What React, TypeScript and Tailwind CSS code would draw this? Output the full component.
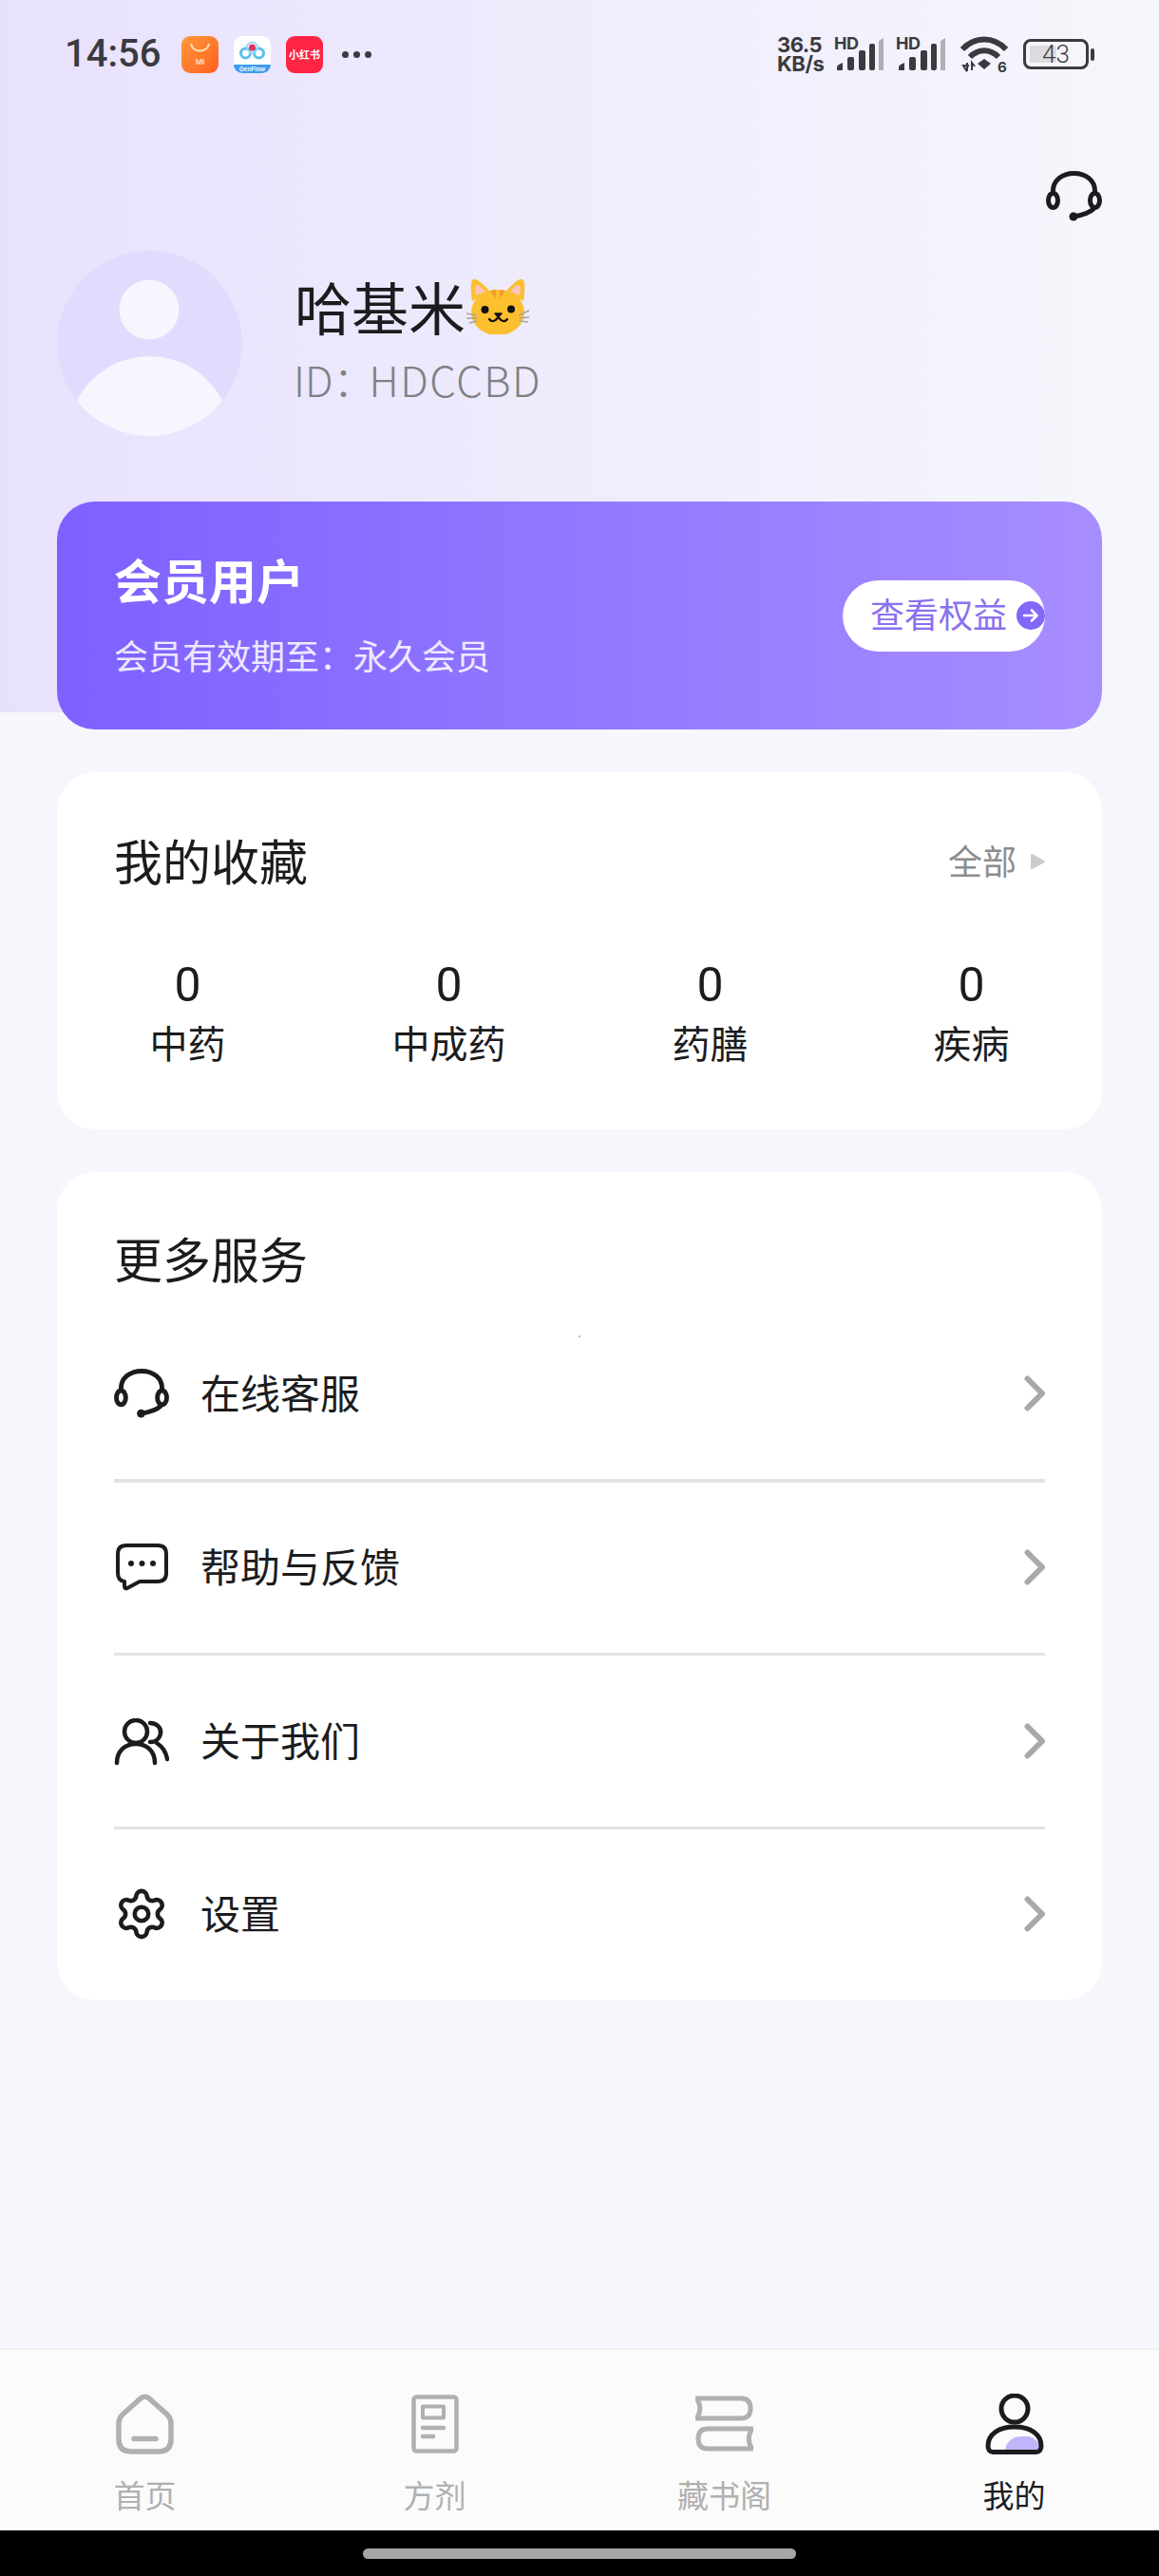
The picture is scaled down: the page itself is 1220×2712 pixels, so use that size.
import React from 'react';
import { Settings } from 'lucide-react';

const HeadsetIcon = ({ className }: { className?: string }) => (
  <svg viewBox="0 0 59 53" className={className} fill="none" stroke="#1c1c1e" strokeWidth="5" strokeLinecap="round">
    <path d="M7.5 21 C7.5 10 17 2.5 29.5 2.5 C42 2.5 51.5 10 51.5 21" />
    <ellipse cx="7.5" cy="31" rx="5" ry="7.5" />
    <ellipse cx="51.5" cy="31" rx="5" ry="7.5" />
    <path d="M50 40 C46 44 40 46 30 48" />
    <circle cx="29" cy="48" r="4.5" fill="#1c1c1e" stroke="none" />
  </svg>
);

const SignalIcon = () => (
  <div className="flex flex-col w-[53px] h-[38px] relative">
    <span className="font-['Inter',sans-serif] font-bold text-[18px] leading-[16px] text-[#3a3a40] tracking-[-0.5px]">HD</span>
    <svg viewBox="0 0 53 38" className="absolute inset-0 w-[53px] h-[38px]">
      <path d="M3 36 V33 Q3 31 5 30 L9 28 V36 Z" fill="#3a3a40" />
      <rect x="14" y="22" width="7" height="14" rx="2" fill="#3a3a40" />
      <rect x="26" y="15" width="7" height="21" rx="2" fill="#3a3a40" />
      <rect x="37" y="8" width="6" height="28" rx="2" fill="#3a3a40" />
      <path d="M47 5 L52 2 V36 H47 Z" fill="#b0b0b4" />
    </svg>
  </div>
);

const WifiIcon = () => (
  <svg viewBox="0 0 50 40" className="w-[50px] h-[40px]" fill="none">
    <path d="M2 15 C15 1 35 1 48 15" stroke="#3a3a40" strokeWidth="6" />
    <path d="M10 23 C19 14 31 14 40 23" stroke="#3a3a40" strokeWidth="6" />
    <path d="M18 30 L25 25 L32 30 L25 36 Z" fill="#3a3a40" />
    <path d="M3 32 L6 37 L8 32 Z M7 38 V29 M12 37 V29 L15 33" stroke="#3a3a40" strokeWidth="2" />
    <text x="39" y="39" fontFamily="Inter, sans-serif" fontWeight="700" fontSize="15" fill="#3a3a40">6</text>
  </svg>
);

const StatusBar = () => (
  <div className="h-[114px] flex items-center justify-between pl-[68px] pr-[68px]">
    <div className="flex items-center">
      <span className="font-['Roboto',sans-serif] font-medium text-[40px] leading-none text-[#3a3a40] w-[123px]">14:56</span>
      <svg viewBox="0 0 39 39" className="w-[39px] h-[39px]">
        <defs>
          <linearGradient id="mi" x1="0" y1="0" x2="1" y2="1">
            <stop offset="0" stopColor="#ff9a3a" />
            <stop offset="1" stopColor="#ff6022" />
          </linearGradient>
        </defs>
        <rect width="39" height="39" rx="9" fill="url(#mi)" />
        <path d="M10 8 C12 18 27 18 29 8" stroke="#ffe2b8" strokeWidth="2" fill="none" />
        <text x="19.5" y="30" textAnchor="middle" fontFamily="Inter, sans-serif" fontSize="8" fontWeight="700" fill="#ffd8b4">MI</text>
      </svg>
      <svg viewBox="0 0 39 39" className="w-[39px] h-[39px] ml-[16px]">
        <rect width="39" height="39" rx="9" fill="#ffffff" />
        <path d="M0 30 H39 V30 A9 9 0 0 1 30 39 H9 A9 9 0 0 1 0 30 Z" fill="#3c9bf0" />
        <circle cx="12.5" cy="18" r="5" fill="none" stroke="#58c0ee" strokeWidth="3" />
        <circle cx="26.5" cy="18" r="5" fill="none" stroke="#58c0ee" strokeWidth="3" />
        <circle cx="19.5" cy="12" r="5.5" fill="none" stroke="#9ad9f2" strokeWidth="2" />
        <circle cx="19.5" cy="12" r="3.5" fill="#e0315f" />
        <text x="19.5" y="37" textAnchor="middle" fontFamily="Inter, sans-serif" fontSize="6.5" fontWeight="600" fill="#ffffff">GenFlow</text>
      </svg>
      <div className="w-[39px] h-[39px] ml-[16px] rounded-[9px] bg-[#fe2443] flex items-center justify-center text-white font-bold text-[11px] leading-none whitespace-nowrap">小红书</div>
      <div className="flex gap-[5px] ml-[20px]">
        <div className="w-[7px] h-[7px] rounded-full bg-[#3a3a40]" />
        <div className="w-[7px] h-[7px] rounded-full bg-[#3a3a40]" />
        <div className="w-[7px] h-[7px] rounded-full bg-[#3a3a40]" />
      </div>
    </div>
    <div className="flex items-center">
      <div className="flex flex-col font-['Inter',sans-serif] font-bold text-[#3a3a40] text-[22px] leading-[20px] w-[60px] tracking-[-0.5px]">
        <span>36.5</span>
        <span>KB/s</span>
      </div>
      <SignalIcon />
      <div className="ml-[12px]"><SignalIcon /></div>
      <div className="ml-[15px]"><WifiIcon /></div>
      <div className="ml-[16px] w-[69px] h-[32px] rounded-[8px] border-[3px] border-[#3a3a40] relative flex items-center justify-center">
        <div className="absolute left-[4px] top-[4px] bottom-[4px] w-[28px] rounded-[3px] bg-[#dcdce0]" />
        <span className="relative font-['Roboto',sans-serif] font-light text-[26px] leading-none text-[#3a3a40]">43</span>
      </div>
      <div className="ml-[2px] w-[4px] h-[13px] rounded-[2px] bg-[#3a3a40]" />
    </div>
  </div>
);

const CatEmoji = () => (
  <svg viewBox="13 9 67 60" className="w-[67px] h-[60px]">
    <path d="M19 34 Q16 14 20 11 Q24 9 38 24 Z" fill="#fcc02e" />
    <path d="M73 34 Q76 14 72 11 Q68 9 54 24 Z" fill="#fcc02e" />
    <path d="M23 28 Q21 18 24 17 Q27 17 33 24 Z" fill="#fbc4bd" />
    <path d="M69 28 Q71 18 68 17 Q65 17 59 24 Z" fill="#fbc4bd" />
    <ellipse cx="46" cy="46" rx="28" ry="24" fill="#fcc02e" />
    <path d="M38 23 Q42 22 44 22 L44 31 Q41 28 38 23 Z M54 23 Q50 22 48 22 L48 31 Q51 28 54 23 Z" fill="#f79a2c" />
    <circle cx="32.5" cy="43" r="4" fill="#111" />
    <circle cx="60" cy="42.5" r="4" fill="#111" />
    <path d="M43 47 H50 L46.5 51 Z" fill="#111" stroke="#111" strokeWidth="1.5" strokeLinejoin="round" />
    <path d="M37 53 Q41 58 46.5 51 Q52 58 56 53" fill="none" stroke="#111" strokeWidth="2.2" strokeLinecap="round" />
    <path d="M13 47 L24 49 M13 52 L24 52 M16 57 L24 55 M68 49 L79 44 M69 52 L79 51 M69 55 L78 56" stroke="#a8a49c" strokeWidth="1.4" />
  </svg>
);

const Avatar = () => (
  <svg viewBox="0 0 195 195" className="w-[195px] h-[195px] shrink-0">
    <defs>
      <clipPath id="avatar-clip"><circle cx="97.5" cy="97.5" r="97.5" /></clipPath>
    </defs>
    <circle cx="97.5" cy="97.5" r="97.5" fill="#e1dcfd" />
    <circle cx="97" cy="62" r="31.5" fill="#f7f5fe" />
    <circle cx="97.5" cy="197" r="86" fill="#f7f5fe" clipPath="url(#avatar-clip)" />
  </svg>
);

const Header = () => (
  <div className="h-[750px] bg-linear-to-r from-[#e8e1fd] to-[#f6f7fc]">
    <StatusBar />
    <div className="flex justify-end pt-[66px] pr-[60px]">
      <HeadsetIcon className="w-[59px] h-[53px]" />
    </div>
    <div className="flex items-start mt-[31px] pl-[60px]">
      <Avatar />
      <div className="ml-[54px] flex flex-col">
        <div className="flex items-center mt-[27px] h-[62px]">
          <span className="text-[60px] leading-none text-[#1c1c1e] pl-[1px]">哈基米</span>
          <span className="ml-[1px]"><CatEmoji /></span>
        </div>
        <span className="mt-[16px] text-[44px] leading-[60px] font-light text-[#808085] whitespace-nowrap">
          ID：<span className="-ml-[6px] tracking-[1.5px]">HDCCBD</span>
        </span>
      </div>
    </div>
  </div>
);

const MemberCard = () => (
  <div className="relative -mt-[222px] mx-[60px] h-[240px] rounded-[40px] bg-linear-to-r from-[#7e60ff] to-[#a78dff] flex items-center justify-between pl-[60px] pr-[60px]">
    <div className="flex flex-col text-white pb-[8px]">
      <span className="text-[50px] leading-[70px] font-bold">会员用户</span>
      <span className="mt-[20px] text-[36px] leading-[50px] text-white/85">会员有效期至：永久会员</span>
    </div>
    <div className="w-[213px] h-[75px] rounded-full bg-white flex items-center pl-[29px] overflow-hidden">
      <span className="text-[36px] leading-none pb-[6px] text-[#8a70f0] whitespace-nowrap">查看权益</span>
      <svg viewBox="0 0 30 30" className="w-[30px] h-[30px] ml-[10px] shrink-0">
        <circle cx="15" cy="15" r="15" fill="#8267f8" />
        <path d="M8 15 H21 M16 9.5 L21.5 15 L16 20.5" fill="none" stroke="#ffffff" strokeWidth="2.6" strokeLinecap="round" strokeLinejoin="round" />
      </svg>
    </div>
  </div>
);

const stats = ['中药', '中成药', '药膳', '疾病'];

const FavoritesCard = () => (
  <div className="mt-[45px] mx-[60px] h-[376px] rounded-[40px] bg-white">
    <div className="flex items-center justify-between pt-[55px] pl-[60px] pr-[60px] h-[129px]">
      <span className="text-[51px] leading-[70px] text-[#1c1c1e]">我的收藏</span>
      <div className="flex items-center gap-[15px]">
        <span className="text-[36px] leading-none text-[#8c8c8c]">全部</span>
        <svg viewBox="0 0 15 18" className="w-[15px] h-[18px] mt-[3px]">
          <path d="M1 2 L14 9 L1 16 Z" fill="#cccccc" stroke="#cccccc" strokeWidth="2" strokeLinejoin="round" />
        </svg>
      </div>
    </div>
    <div className="grid grid-cols-4 mt-[65px]">
      {stats.map((s) => (
        <div key={s} className="flex flex-col items-center">
          <span className="text-[50px] leading-[60px] text-[#1c1c1e] font-['Roboto',sans-serif]">0</span>
          <span className="text-[40px] leading-[60px] text-[#1c1c1e]">{s}</span>
        </div>
      ))}
    </div>
  </div>
);

const ChatIcon = () => (
  <svg viewBox="0 0 55 51" className="w-[55px] h-[51px]" fill="none" stroke="#1c1c1e" strokeWidth="4">
    <path d="M11 2 H44 Q53 2 53 11 V31 Q53 40 44 40 H25 L12 47 Q9 48 9 45 V40 Q2 39 2 31 V11 Q2 2 11 2 Z" strokeLinejoin="round" />
    <circle cx="16" cy="21" r="3" fill="#1c1c1e" stroke="none" />
    <circle cx="27.5" cy="21" r="3" fill="#1c1c1e" stroke="none" />
    <circle cx="39" cy="21" r="3" fill="#1c1c1e" stroke="none" />
  </svg>
);

const UsersIcon = () => (
  <svg viewBox="0 0 58 50" className="w-[58px] h-[50px] mt-[2px]" fill="none" stroke="#1c1c1e" strokeWidth="4.5" strokeLinecap="round">
    <circle cx="23" cy="14" r="12" />
    <path d="M3 47 C3 34 12 27 23 27 C34 27 43 34 43 47" />
    <path d="M38 5 C45 5 50 10 49 16 C48 22 43 25 38 25" />
    <path d="M45 26 C51 30 55 36 56 43" />
  </svg>
);

const Chevron = () => (
  <svg viewBox="0 0 22 38" className="w-[22px] h-[38px] shrink-0" fill="none" stroke="#a9a9a9" strokeWidth="6" strokeLinecap="round" strokeLinejoin="round">
    <path d="M3.5 3.5 L19 19 L3.5 34.5" />
  </svg>
);

const services = [
  { label: '在线客服', icon: <HeadsetIcon className="w-[58px] h-[52px]" />, border: 'border-b-4 border-[#e3e3e3]' },
  { label: '帮助与反馈', icon: <ChatIcon />, border: 'border-b-[3px] border-[#e3e3e3]' },
  { label: '关于我们', icon: <UsersIcon />, border: 'border-b-[3px] border-[#e3e3e3]' },
  { label: '设置', icon: <Settings className="w-[60px] h-[60px] text-[#1c1c1e]" strokeWidth={1.9} />, border: 'border-b-[3px] border-transparent' },
];

const ServicesCard = () => (
  <div className="relative mt-[45px] mx-[60px] h-[872px] rounded-[40px] bg-white px-[60px]">
    <div className="w-[2px] h-[2px] bg-[#bbbbbb] absolute left-[549px] top-[172px]" />
    <div className="pt-[60px] text-[51px] leading-[60px] text-[#1c1c1e]">更多服务</div>
    <div className="mt-[24px] flex flex-col">
      {services.map((s) => (
        <div key={s.label} className={`h-[182.5px] flex items-center ${s.border}`}>
          <div className="w-[58px] flex justify-center shrink-0">{s.icon}</div>
          <span className="ml-[33px] flex-1 text-[42px] leading-none pb-[4px] text-[#1c1c1e]">{s.label}</span>
          <Chevron />
        </div>
      ))}
    </div>
  </div>
);

const HomeTab = () => (
  <svg viewBox="0 0 61 64" className="w-[61px] h-[64px]" fill="none" stroke="#b0b0b0" strokeWidth="5.5" strokeLinejoin="round" strokeLinecap="round">
    <path d="M26 5 Q30.5 1.5 35 5 L54 22 Q58 26 58 32 V48 Q58 61 45 61 H16 Q3 61 3 48 V32 Q3 26 7 22 Z" />
    <path d="M19 47.5 H42" strokeWidth="5.5" />
  </svg>
);

const RecipeTab = () => (
  <svg viewBox="0 0 50 62" className="w-[50px] h-[62px]" fill="none" stroke="#b0b0b0" strokeWidth="4.5" strokeLinejoin="round" strokeLinecap="round">
    <rect x="2.5" y="2.5" width="45" height="57" rx="3" />
    <rect x="12" y="12.5" width="22" height="12" strokeWidth="4" />
    <path d="M12 35 H34 M12 44 H23" strokeWidth="4.5" />
  </svg>
);

const BooksTab = () => (
  <svg viewBox="0 0 61 60" className="w-[61px] h-[60px]" fill="none" stroke="#b0b0b0" strokeWidth="5" strokeLinejoin="round">
    <path d="M1 3 H48 C55 3 58 7 58 13.5 C58 20 55 24 48 24 H1 C6 18 6 9 1 3 Z" />
    <path d="M60 35 H13 C6 35 3 39 3 45.5 C3 52 6 56 13 56 H60 C55 50 55 41 60 35 Z" />
  </svg>
);

const MeTab = () => (
  <svg viewBox="0 0 62 64" className="w-[62px] h-[64px]" fill="none">
    <path d="M21 61 C21 52 28 45 38 45 H44 C52 45 58 52 59 61 Z" fill="#c2b5fb" />
    <circle cx="31" cy="16" r="14" stroke="#1c1c1e" strokeWidth="5" />
    <path d="M3 55 C3 43 14 35 31 35 C48 35 59 43 59 55 C59 59 57 61.5 54 61.5 H8 C5 61.5 3 59 3 55 Z" stroke="#1c1c1e" strokeWidth="5" strokeLinejoin="round" />
  </svg>
);

const tabs = [
  { label: '首页', icon: <HomeTab />, active: false },
  { label: '方剂', icon: <RecipeTab />, active: false },
  { label: '藏书阁', icon: <BooksTab />, active: false },
  { label: '我的', icon: <MeTab />, active: true },
];

const TabBar = () => (
  <div className="h-[192px] border-t-2 border-[#efefef] bg-[#fbfbfb] grid grid-cols-4">
    {tabs.map((t) => (
      <div key={t.label} className="flex flex-col items-center pt-[45px]">
        <div className="h-[66px] flex items-center justify-center">{t.icon}</div>
        <span className={`mt-[19px] text-[33px] leading-[44px] ${t.active ? 'text-[#1c1c1e]' : 'text-[#b0b0b0]'}`}>{t.label}</span>
      </div>
    ))}
  </div>
);

export default function App() {
  return (
    <div className="w-[1220px] h-[2712px] flex flex-col bg-[#f6f7fc] font-['Noto_Sans_CJK_SC','Noto_Sans',sans-serif] overflow-hidden">
      <Header />
      <MemberCard />
      <FavoritesCard />
      <ServicesCard />
      <div className="flex-1" />
      <TabBar />
      <div className="h-[48px] bg-black flex justify-center pt-[19px]">
        <div className="w-[456px] h-[11px] rounded-full bg-[#a6a6a6]" />
      </div>
    </div>
  );
}
